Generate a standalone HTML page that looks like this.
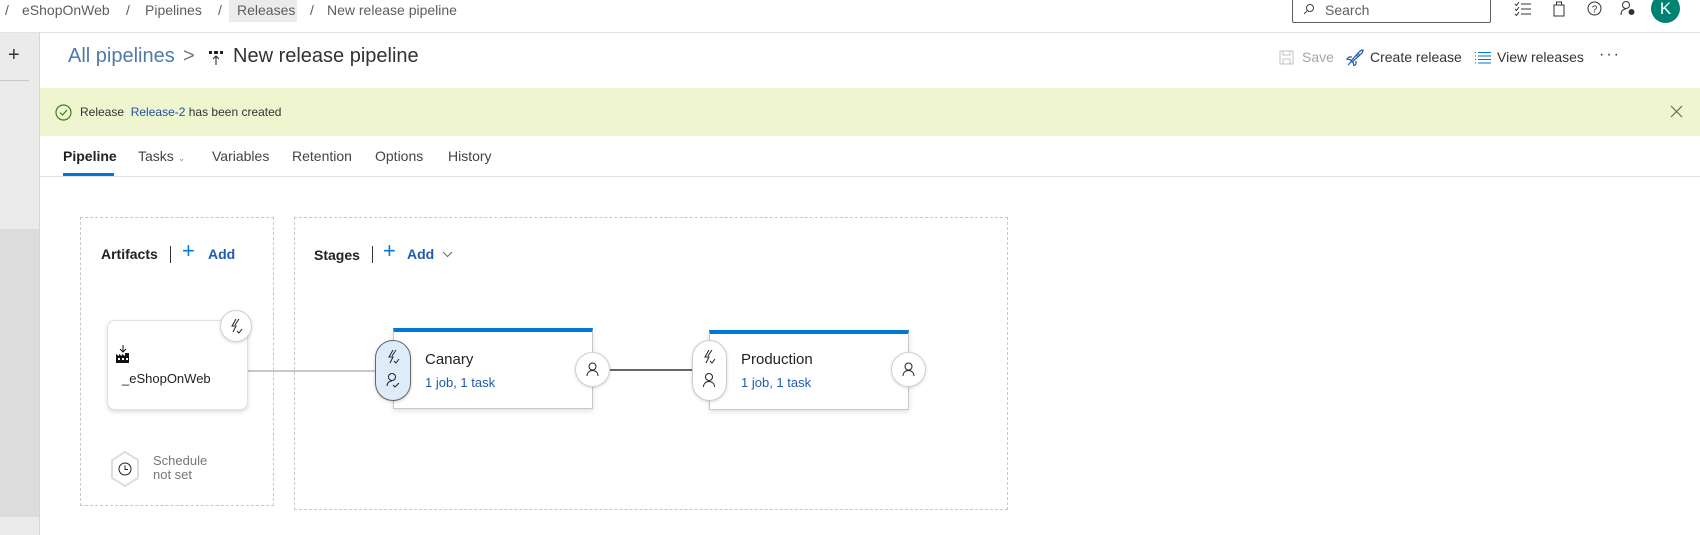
<!DOCTYPE html>
<html><head><meta charset="utf-8"><style>
*{box-sizing:border-box;margin:0;padding:0}
body{width:1700px;height:535px;overflow:hidden;background:#fff;font-family:"Segoe UI","Liberation Sans",sans-serif;color:#323130;position:relative}
.a{position:absolute;white-space:nowrap}
.bc{top:0;font-size:14px;color:#605e5c;line-height:20px}
.dash{position:absolute;border:1px dashed #c8c8c8}
.circ{position:absolute;border-radius:50%;background:#fff;border:1px solid #d0d0d0;box-shadow:0 1px 3px rgba(0,0,0,.15);display:flex;align-items:center;justify-content:center}
.card{position:absolute;background:#fff;border:1px solid #c8c8c8;border-top:4px solid #0078d4;box-shadow:0 2px 5px rgba(0,0,0,.12)}
</style></head><body>
<div class="a bc" style="left:5px">/</div>
<div class="a bc" style="left:22px">eShopOnWeb</div>
<div class="a bc" style="left:126px">/</div>
<div class="a bc" style="left:145px">Pipelines</div>
<div class="a bc" style="left:218px">/</div>
<div class="a" style="left:229px;top:0;width:68px;height:22px;background:#ebebeb"></div>
<div class="a bc" style="left:237px">Releases</div>
<div class="a bc" style="left:310px">/</div>
<div class="a bc" style="left:327px">New release pipeline</div>
<div class="a" style="left:1292px;top:-2px;width:199px;height:25px;border:1px solid #605e5c;border-radius:2px"></div>
<svg class="a" style="left:1303px;top:3px" width="12" height="12" viewBox="0 0 12 12"><circle cx="7" cy="5" r="3.5" fill="none" stroke="#444"/><path d="M4.5 7.5L1 11" stroke="#444"/></svg>
<div class="a bc" style="left:1325px;top:0;color:#605e5c">Search</div>
<svg class="a" style="left:1514px;top:1px" width="18" height="16" viewBox="0 0 18 16" fill="none" stroke="#333"><path d="M1 3l1.5 1.5L5 1M1 8l1.5 1.5L5 6M1 13l1.5 1.5L5 11M7 3h10M7 8h10M7 13h10"/></svg>
<svg class="a" style="left:1553px;top:0" width="12" height="17" viewBox="0 0 12 17" fill="none" stroke="#333"><rect x="1" y="5" width="10" height="11"/><path d="M3.5 5V2h5v3"/></svg>
<svg class="a" style="left:1587px;top:1px" width="15" height="15"><circle cx="7.5" cy="7.5" r="6.5" fill="none" stroke="#333"/><text x="7.5" y="11.5" font-size="10" text-anchor="middle" fill="#333" font-family="Liberation Sans">?</text></svg>
<svg class="a" style="left:1620px;top:0" width="16" height="17" viewBox="0 0 16 17" fill="none" stroke="#333"><circle cx="6" cy="5" r="3.5"/><path d="M1 15c0-4 2-6 5-6"/><circle cx="11.5" cy="12" r="2.5" fill="#333"/></svg>
<div class="a" style="left:1651px;top:-6px;width:29px;height:29px;border-radius:50%;background:#008272;color:#fff;font-size:17px;text-align:center;line-height:29px">K</div>
<div class="a" style="left:0;top:32px;width:1700px;height:1px;background:#e1e1e1"></div>
<div class="a" style="left:0;top:33px;width:39px;height:196px;background:#ebebeb"></div>
<div class="a" style="left:0;top:229px;width:39px;height:288px;background:#dcdcdc"></div>
<div class="a" style="left:0;top:517px;width:39px;height:18px;background:#ebebeb"></div>
<div class="a" style="left:39px;top:33px;width:1px;height:502px;background:#d6d6d6"></div>
<div class="a" style="left:0;top:80px;width:29px;height:1px;background:#c8c8c8"></div>
<div class="a" style="left:8px;top:44px;font-size:20px;color:#333">+</div>
<div class="a" style="left:68px;top:45px;font-size:20px;color:#4f7bab">All pipelines</div>
<div class="a" style="left:183px;top:45px;font-size:20px;color:#777">&gt;</div>
<svg class="a" style="left:208px;top:50px" width="16" height="16" viewBox="0 0 16 16"><rect x="1" y="1" width="3" height="3" fill="#222"/><rect x="6" y="1" width="4" height="3" fill="#222"/><rect x="12" y="1" width="3" height="3" fill="#222"/><path d="M8 15V6M5 9l3-3 3 3" stroke="#222" fill="none"/></svg>
<div class="a" style="left:233px;top:45px;font-size:20px;color:#333">New release pipeline</div>
<svg class="a" style="left:1279px;top:50px" width="15" height="15" viewBox="0 0 15 15" fill="none" stroke="#c0c0c0"><rect x="1" y="1" width="13" height="13"/><rect x="4" y="1" width="7" height="4"/><rect x="4" y="9" width="7" height="5"/></svg>
<div class="a" style="left:1302px;top:49px;font-size:14px;color:#a6a6a6">Save</div>
<svg class="a" style="left:1346px;top:49px" width="18" height="17" viewBox="0 0 18 17" fill="none" stroke="#1e5ab4" stroke-width="1.2"><path d="M5 12L13 3c1-1 3-2 4-2-0 1-1 3-2 4l-9 8zM6 8H3l-2 2 4 1M10 12v3l-2 2-1-4M2 16l3-3"/><circle cx="12" cy="6" r="1.3"/></svg>
<div class="a" style="left:1370px;top:49px;font-size:14px;color:#333">Create release</div>
<svg class="a" style="left:1474px;top:51px" width="17" height="13" viewBox="0 0 17 13" stroke="#0078d4"><path d="M1 1.5h1M1 5h1M1 8.5h1M1 12h1M4 1.5h13M4 5h13M4 8.5h13M4 12h13"/></svg>
<div class="a" style="left:1497px;top:49px;font-size:14px;color:#333">View releases</div>
<div class="a" style="left:1599px;top:46px;font-size:16px;color:#333;letter-spacing:2px">···</div>
<div class="a" style="left:40px;top:88px;width:1660px;height:48px;background:#eff6cf"></div>
<svg class="a" style="left:55px;top:104px" width="17" height="17"><circle cx="8.5" cy="8.5" r="7.5" fill="none" stroke="#3a7d22" stroke-width="1.2"/><path d="M5 8.5l2.5 2.5 4.5-5" fill="none" stroke="#3a7d22" stroke-width="1.2"/></svg>
<div class="a" style="left:80px;top:105px;font-size:12px;color:#333">Release <span style="color:#1e4f9c">&nbsp;Release-2</span> has been created</div>
<svg class="a" style="left:1670px;top:105px" width="13" height="13" stroke="#666" stroke-width="1.2"><path d="M1 1l11 11M12 1L1 12"/></svg>
<div class="a" style="left:63px;top:148px;font-size:14px;color:#222;font-weight:600">Pipeline</div>
<div class="a" style="left:63px;top:173px;width:51px;height:3px;background:#0078d4"></div>
<div class="a" style="left:138px;top:148px;font-size:14px;color:#444">Tasks <span style="font-size:9px;color:#888">&#8964;</span></div>
<div class="a" style="left:212px;top:148px;font-size:14px;color:#444">Variables</div>
<div class="a" style="left:292px;top:148px;font-size:14px;color:#444">Retention</div>
<div class="a" style="left:375px;top:148px;font-size:14px;color:#444">Options</div>
<div class="a" style="left:448px;top:148px;font-size:14px;color:#444">History</div>
<div class="a" style="left:40px;top:176px;width:1660px;height:1px;background:#e1e1e1"></div>
<div class="dash" style="left:80px;top:217px;width:194px;height:289px"></div>
<div class="dash" style="left:294px;top:217px;width:714px;height:293px"></div>
<div class="a" style="left:101px;top:246px;font-size:14px;font-weight:600;color:#222">Artifacts</div>
<div class="a" style="left:170px;top:246px;width:1px;height:17px;background:#333"></div>
<div class="a" style="left:182px;top:238px;font-size:22px;font-weight:300;color:#0078d4">+</div>
<div class="a" style="left:208px;top:246px;font-size:14px;font-weight:600;color:#1e5ab4">Add</div>
<div class="a" style="left:314px;top:247px;font-size:14px;font-weight:600;color:#222">Stages</div>
<div class="a" style="left:372px;top:246px;width:1px;height:17px;background:#333"></div>
<div class="a" style="left:383px;top:238px;font-size:22px;font-weight:300;color:#0078d4">+</div>
<div class="a" style="left:407px;top:246px;font-size:14px;font-weight:600;color:#1e5ab4">Add</div>
<svg class="a" style="left:442px;top:251px" width="11" height="7" stroke="#666" fill="none"><path d="M1 1l4.5 4.5L10 1"/></svg>
<div class="a" style="left:247px;top:370px;width:130px;height:2px;background:#c8c8c8"></div>
<div class="a" style="left:107px;top:320px;width:141px;height:90px;background:#fff;border-radius:8px;border:1px solid #e0e0e0;box-shadow:0 2px 5px rgba(0,0,0,.15)"></div>
<svg class="a" style="left:115px;top:345px" width="16" height="18" viewBox="0 0 16 18"><path d="M8 0v6M5 4l3 3 3-3" stroke="#111" fill="none"/><path d="M1 18V9l3 2V9l3 2V9l3 2V8h4v10z" fill="#111"/><rect x="3" y="13" width="2" height="2" fill="#fff"/><rect x="7" y="13" width="2" height="2" fill="#fff"/><rect x="11" y="13" width="2" height="2" fill="#fff"/></svg>
<div class="a" style="left:122px;top:371px;font-size:13px;color:#222">_eShopOnWeb</div>
<div class="circ" style="left:220px;top:310px;width:32px;height:32px"><svg width="14" height="16" viewBox="0 0 14 16" fill="none" stroke="#222"><path d="M7 1L3 8h4l-3 6M10 1L6 7"/><path d="M8 13l2 2 3-4"/></svg></div>
<svg class="a" style="left:109px;top:450px" width="32" height="38" viewBox="0 0 32 38"><path d="M16 2l13 8v18l-13 8-13-8V10z" fill="#fff" stroke="#ddd" stroke-width="2"/><circle cx="16" cy="19" r="6" fill="none" stroke="#222"/><path d="M16 15.5v4h3" fill="none" stroke="#222"/></svg>
<div class="a" style="left:153px;top:454px;font-size:13px;color:#777;line-height:14px">Schedule<br>not set</div>
<div class="card" style="left:393px;top:328px;width:200px;height:81px"></div>
<div class="a" style="left:375px;top:340px;width:36px;height:61px;border-radius:18px;background:#deecf9;border:1px solid #666;box-shadow:0 1px 3px rgba(0,0,0,.2)"></div>
<svg class="a" style="left:385px;top:349px" width="16" height="45" viewBox="0 0 16 45" fill="none" stroke="#222"><path d="M8 1L4 8h4l-3 6M11 1L7 7M9 12l2 2 3-4"/><circle cx="7" cy="28" r="3.5"/><path d="M2 37c0-3 2-5 5-5M8 36l2 2 4-4"/></svg>
<div class="a" style="left:425px;top:351px;font-size:15px;color:#222">Canary</div>
<div class="a" style="left:425px;top:375px;font-size:13px;color:#1e5ab4">1 job, 1 task</div>
<div class="a" style="left:610px;top:369px;width:85px;height:2px;background:#666"></div>
<div class="circ" style="left:575px;top:352px;width:35px;height:35px"><svg width="13" height="15" viewBox="0 0 13 15" fill="none" stroke="#222"><circle cx="6.5" cy="4.5" r="3.5"/><path d="M1 14c0-3.5 2.5-5.5 5.5-5.5S12 10.5 12 14"/></svg></div>
<div class="card" style="left:709px;top:330px;width:200px;height:80px"></div>
<div class="a" style="left:692px;top:340px;width:35px;height:61px;border-radius:18px;background:#fff;border:1px solid #ccc;box-shadow:0 1px 3px rgba(0,0,0,.15)"></div>
<svg class="a" style="left:701px;top:349px" width="16" height="45" viewBox="0 0 16 45" fill="none" stroke="#222"><path d="M8 1L4 8h4l-3 6M11 1L7 7M9 12l2 2 3-4"/><circle cx="8" cy="28" r="3.5"/><path d="M2.5 38c0-3.5 2.5-5.5 5.5-5.5s5.5 2 5.5 5.5"/></svg>
<div class="a" style="left:741px;top:351px;font-size:15px;color:#222">Production</div>
<div class="a" style="left:741px;top:375px;font-size:13px;color:#1e5ab4">1 job, 1 task</div>
<div class="circ" style="left:891px;top:352px;width:35px;height:35px"><svg width="13" height="15" viewBox="0 0 13 15" fill="none" stroke="#222"><circle cx="6.5" cy="4.5" r="3.5"/><path d="M1 14c0-3.5 2.5-5.5 5.5-5.5S12 10.5 12 14"/></svg></div>
</body></html>
